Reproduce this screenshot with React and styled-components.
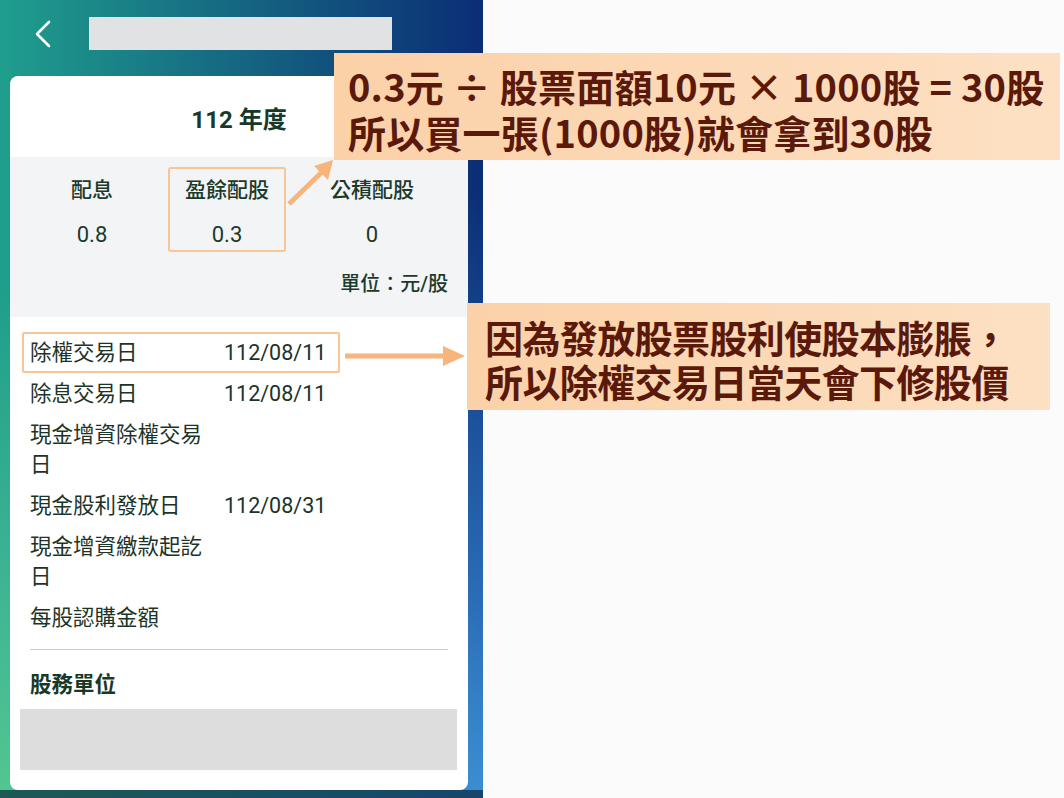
import React from "react";
import styled, { createGlobalStyle } from "styled-components";

const GlobalStyle = createGlobalStyle`
  html, body {
    margin: 0;
    padding: 0;
    background: #fbfbfb;
  }
  body {
    font-family: "Roboto", "Noto Sans CJK TC", "Noto Sans", sans-serif;
  }
`;

const Page = styled.div`
  position: relative;
  display: flex;
  width: 1064px;
  height: 798px;
  overflow: hidden;
`;

const Phone = styled.div`
  width: 483px;
  display: flex;
  flex-direction: column;
  background:
    radial-gradient(circle at 0% 100%, #52c790 0%, rgba(82, 199, 144, 0) 55%),
    radial-gradient(circle at 100% 100%, #3a8ad8 0%, rgba(58, 138, 216, 0) 65%),
    linear-gradient(to right, #1f9e8d, #0b2d76);
`;

const Header = styled.div`
  height: 76px;
  display: flex;
  align-items: flex-start;
  padding-top: 17px;
  box-sizing: border-box;
`;

const Back = styled.div`
  width: 89px;
  height: 33px;
  display: flex;
  align-items: center;
  padding-left: 34px;
  box-sizing: border-box;
`;

const TitleBar = styled.div`
  width: 303px;
  height: 33px;
  background: #e1e2e3;
`;

const Card = styled.div`
  flex: 1;
  margin: 0 15px 0 10px;
  background: #ffffff;
  border-radius: 8px;
  display: flex;
  flex-direction: column;
  color: #1b3a2b;
  overflow: hidden;
`;

const YearTitle = styled.div`
  padding: 29px 0 22px;
  line-height: 30px;
  text-align: center;
  font-size: 24px;
  font-weight: 700;
  color: #173a28;
`;

const Summary = styled.div`
  background: #f2f4f6;
  padding: 10px 16px 18px 12px;
  display: flex;
  flex-direction: column;
`;

const Columns = styled.div`
  display: grid;
  grid-template-columns: 140px 130px 160px;
`;

const Column = styled.div`
  justify-self: center;
  width: 118px;
  box-sizing: border-box;
  padding: 6px 0 0;
  border: 2px solid ${(p) => (p.$marked ? "#f8c597" : "transparent")};
  border-radius: 3px;
  display: flex;
  flex-direction: column;
  align-items: center;
  gap: 15px;
  line-height: 30px;
`;

const ColLabel = styled.div`
  font-size: 21px;
  font-weight: 500;
`;

const ColValue = styled.div`
  font-size: 22px;
`;

const Unit = styled.div`
  margin: 17px 4px 0 0;
  align-self: flex-end;
  line-height: 30px;
  font-size: 20px;
  font-weight: 500;
`;

const Rows = styled.div`
  margin-top: 15px;
  padding: 0 20px;
  display: flex;
  flex-direction: column;
  align-items: flex-start;
`;

const Row = styled.div`
  display: grid;
  grid-template-columns: 194px auto;
  margin-left: -8px;
  padding: 3.5px 12px 3.5px 6px;
  border: 2px solid ${(p) => (p.$marked ? "#f8c597" : "transparent")};
  border-radius: 2px;
  line-height: 30px;
  font-size: 21.5px;
  color: #1c3428;
`;

const RowLabel = styled.div`
  padding-right: 10px;
`;

const Divider = styled.div`
  margin: 11px 20px 0;
  height: 1px;
  background: #c9cdd0;
`;

const SectionTitle = styled.div`
  margin: 20px 20px 0;
  line-height: 30px;
  font-size: 21.5px;
  font-weight: 700;
  color: #173a28;
`;

const Placeholder = styled.div`
  margin: 9px 11px 0 10px;
  height: 61px;
  background: #dddddd;
`;

const BottomBar = styled.div`
  height: 8px;
  background: linear-gradient(to right, #1c5a55, #16466c);
`;

const Blank = styled.div`
  flex: 1;
  background: #fbfbfb;
`;

const Callout = styled.div`
  position: absolute;
  left: ${(p) => p.$left}px;
  top: ${(p) => p.$top}px;
  width: ${(p) => p.$width}px;
  height: ${(p) => p.$height}px;
  box-sizing: border-box;
  padding: ${(p) => p.$pad};
  background: linear-gradient(to right, #fbd1a8, #fde0c3);
  color: #5a190b;
  font-family: "Noto Sans CJK TC", "Noto Sans", sans-serif;
  font-weight: 700;
  font-size: 38px;
  line-height: ${(p) => p.$lh}px;
  white-space: nowrap;
  letter-spacing: ${(p) => p.$ls}px;
`;

const Arrow = styled.svg`
  position: absolute;
  left: ${(p) => p.$left}px;
  top: ${(p) => p.$top}px;
  overflow: visible;
`;

const rows = [
  { label: "除權交易日", value: "112/08/11", marked: true },
  { label: "除息交易日", value: "112/08/11" },
  { label: "現金增資除權交易日", value: "" },
  { label: "現金股利發放日", value: "112/08/31" },
  { label: "現金增資繳款起訖日", value: "" },
  { label: "每股認購金額", value: "" },
];

const columns = [
  { label: "配息", value: "0.8" },
  { label: "盈餘配股", value: "0.3", marked: true },
  { label: "公積配股", value: "0" },
];

export default function App() {
  return (
    <>
      <GlobalStyle />
      <Page>
        <Phone>
          <Header>
            <Back>
              <svg width="18" height="28" viewBox="0 0 18 28">
                <path
                  d="M15 2 L3 14 L15 26"
                  fill="none"
                  stroke="#ffffff"
                  strokeWidth="2.6"
                  strokeLinecap="round"
                  strokeLinejoin="round"
                />
              </svg>
            </Back>
            <TitleBar />
          </Header>
          <Card>
            <YearTitle>112 年度</YearTitle>
            <Summary>
              <Columns>
                {columns.map((c) => (
                  <Column key={c.label} $marked={c.marked}>
                    <ColLabel>{c.label}</ColLabel>
                    <ColValue>{c.value}</ColValue>
                  </Column>
                ))}
              </Columns>
              <Unit>單位：元/股</Unit>
            </Summary>
            <Rows>
              {rows.map((r) => (
                <Row key={r.label} $marked={r.marked}>
                  <RowLabel>{r.label}</RowLabel>
                  <div>{r.value}</div>
                </Row>
              ))}
            </Rows>
            <Divider />
            <SectionTitle>股務單位</SectionTitle>
            <Placeholder />
          </Card>
          <BottomBar />
        </Phone>
        <Blank />

        <Arrow $left={284} $top={156} width="52" height="52" viewBox="0 0 52 52">
          <line x1="5" y1="48" x2="40" y2="14" stroke="#f7b57b" strokeWidth="5" />
          <polygon points="49,4 44,24 30,10" fill="#f7b57b" />
        </Arrow>
        <Arrow $left={343} $top={344} width="126" height="24" viewBox="0 0 126 24">
          <line x1="2" y1="12" x2="104" y2="12" stroke="#f7b57b" strokeWidth="5" />
          <polygon points="100,2 122,12 100,22" fill="#f7b57b" />
        </Arrow>

        <Callout $left={334} $top={53} $width={726} $height={107} $pad="10px 14px 0" $lh={46} $ls={0.2}>
          0.3元 ÷ 股票面額10元 × 1000股 = 30股
          <br />
          所以買一張(1000股)就會拿到30股
        </Callout>
        <Callout $left={467} $top={303} $width={583} $height={107} $pad="12px 18px 0" $lh={44} $ls={-0.6}>
          因為發放股票股利使股本膨脹，
          <br />
          所以除權交易日當天會下修股價
        </Callout>
      </Page>
    </>
  );
}
